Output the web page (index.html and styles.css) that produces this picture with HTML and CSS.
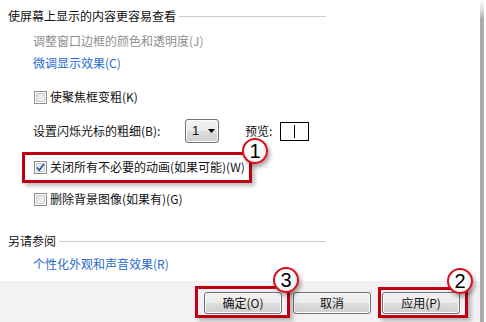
FILE: index.html
```html
<!DOCTYPE html>
<html lang="zh-CN">
<head>
<meta charset="utf-8">
<title>轻松访问</title>
<link rel="stylesheet" href="styles.css">
</head>
<body>
<div class="window">
  <div class="main">
    <div class="content">
      <div class="group-title"><span>使屏幕上显示的内容更容易查看</span><i class="rule"></i></div>
      <div class="row r-gray disabled">调整窗口边框的颜色和透明度(J)</div>
      <div class="row r-link link">微调显示效果(C)</div>
      <label class="row r-cb1 check"><span class="box"></span><span>使聚焦框变粗(K)</span></label>
      <div class="row r-cursor">
        <span class="cursor-label">设置闪烁光标的粗细(B):</span>
        <span class="select">1<svg class="arrow" width="7" height="4" viewBox="0 0 7 4"><path d="M0 0h7L3.5 4z" fill="#000"/></svg></span>
        <span class="preview-label">预览:</span>
        <span class="preview"><i class="caret"></i></span>
      </div>
      <label class="row r-cb2 check"><span class="box checked"><svg width="9" height="9" viewBox="0 0 9 9"><path d="M1 4.5l2.3 2.8L8 1" fill="none" stroke="#2a4ea8" stroke-width="1.6"/></svg></span><span>关闭所有不必要的动画(如果可能)(W)</span></label>
      <label class="row r-cb3 check"><span class="box"></span><span>删除背景图像(如果有)(G)</span></label>
      <div class="group-title r-see"><span>另请参阅</span><i class="rule"></i></div>
      <div class="row r-link2 link">个性化外观和声音效果(R)</div>
    </div>
    <div class="footer">
      <button class="btn">确定(O)</button>
      <button class="btn">取消</button>
      <button class="btn">应用(P)</button>
    </div>
  </div>
  <div class="scrollbar"></div>
</div>

<div class="mark box-1"></div>
<div class="mark box-3"></div>
<div class="mark box-2"></div>
<div class="badge badge-1">1</div>
<div class="badge badge-3">3</div>
<div class="badge badge-2">2</div>
</body>
</html>
```

FILE: styles.css
```css
* { box-sizing: border-box; }
html, body { margin: 0; padding: 0; background: #fff; }
body {
  width: 486px;
  height: 322px;
  overflow: hidden;
  position: relative;
  font-family: "Noto Sans CJK SC", "Noto Sans", sans-serif;
  font-size: 12px;
  color: #111;
}
.window { display: flex; height: 322px; }
.main { width: 480px; display: flex; flex-direction: column; }
.content { height: 281px; padding-left: 8px; padding-top: 6px; }
.scrollbar {
  width: 4px;
  height: 322px;
  background: linear-gradient(to bottom, #fff 0, #e4e4e4 8px, #a9a9a9 20px, #a9a9a9 100%);
}

.group-title {
  display: flex;
  align-items: center;
  width: 318px;
  height: 20px;
  line-height: 20px;
}
.group-title .rule {
  flex: 1;
  height: 1px;
  background: #cdcdcd;
  margin-left: 3px;
}
.row {
  height: 20px;
  line-height: 20px;
  padding-left: 25px;
  display: flex;
  align-items: center;
}
.disabled { color: #8f8f8f; }
.link { color: #1f6bcc; }
.r-gray { margin-top: 5px; }
.r-link { margin-top: 2px; }
.r-cb1 { margin-top: 14px; }
.r-cursor { margin-top: 12px; height: 24px; }
.r-cb2 { margin-top: 14px; }
.r-cb3 { margin-top: 12px; }
.r-see { margin-top: 22px; }
.r-link2 { margin-top: 3px; }

.check { gap: 3px; padding-left: 26px; }
.box {
  width: 13px;
  height: 13px;
  border: 1px solid #8e8f8f;
  background: linear-gradient(135deg, #dcdcdc, #f6f6f6);
  box-shadow: inset 0 0 0 1px #fff, inset 0 0 0 2px #cfcfcf;
  display: flex;
  align-items: center;
  justify-content: center;
}
.box.checked { background: linear-gradient(135deg, #e2e2e2, #fafafa); }

.cursor-label { width: 152px; }
.select {
  width: 34px;
  height: 24px;
  border: 1px solid #707070;
  border-radius: 3px;
  background: linear-gradient(to bottom, #f2f2f2 0, #ebebeb 50%, #dddddd 51%, #cfcfcf 100%);
  box-shadow: inset 0 0 0 1px #fcfcfc;
  display: flex;
  align-items: center;
  padding-left: 6px;
  font-family: "Liberation Sans", sans-serif;
  font-size: 13px;
  gap: 9px;
}
.preview-label { margin-left: 26px; }
.preview {
  margin-left: 8px;
  width: 29px;
  height: 19px;
  border: 1px solid #000;
  display: flex;
  justify-content: center;
  align-items: center;
}
.caret { width: 1px; height: 13px; background: #000; }

.footer {
  flex: 1;
  background: #f4f1f4;
  display: flex;
  justify-content: flex-end;
  gap: 11px;
  padding: 11px 20px 0 0;
}
.btn {
  width: 78px;
  height: 22px;
  border: 1px solid #707070;
  border-radius: 3px;
  background: linear-gradient(to bottom, #f2f2f2 0, #ebebeb 50%, #dddddd 51%, #cfcfcf 100%);
  box-shadow: inset 0 0 0 1px #fbfbfb;
  font-family: "Noto Sans CJK SC", sans-serif;
  font-size: 12px;
  color: #111;
  padding: 0;
  line-height: 18px;
}

.mark {
  position: absolute;
  border: 3px solid #bf0010;
  box-shadow: 3px 3px 4px rgba(0,0,0,0.25);
}
.box-1 { left: 22px; top: 152px; width: 230px; height: 31px; }
.box-3 { left: 195px; top: 286px; width: 95px; height: 32px; }
.box-2 { left: 378px; top: 287px; width: 90px; height: 31px; }

.badge {
  position: absolute;
  width: 26px;
  height: 26px;
  border-radius: 50%;
  border: 2px solid #d8101c;
  background: radial-gradient(circle at 40% 35%, #fff 0, #fff 45%, #e4e4e4 100%);
  box-shadow: 2px 3px 4px rgba(0,0,0,0.35);
  font-family: "Liberation Sans", sans-serif;
  font-size: 20px;
  line-height: 22px;
  text-align: center;
  color: #000;
}
.badge-1 { left: 242px; top: 138px; }
.badge-3 { left: 273px; top: 267px; }
.badge-2 { left: 447px; top: 268px; }
```
